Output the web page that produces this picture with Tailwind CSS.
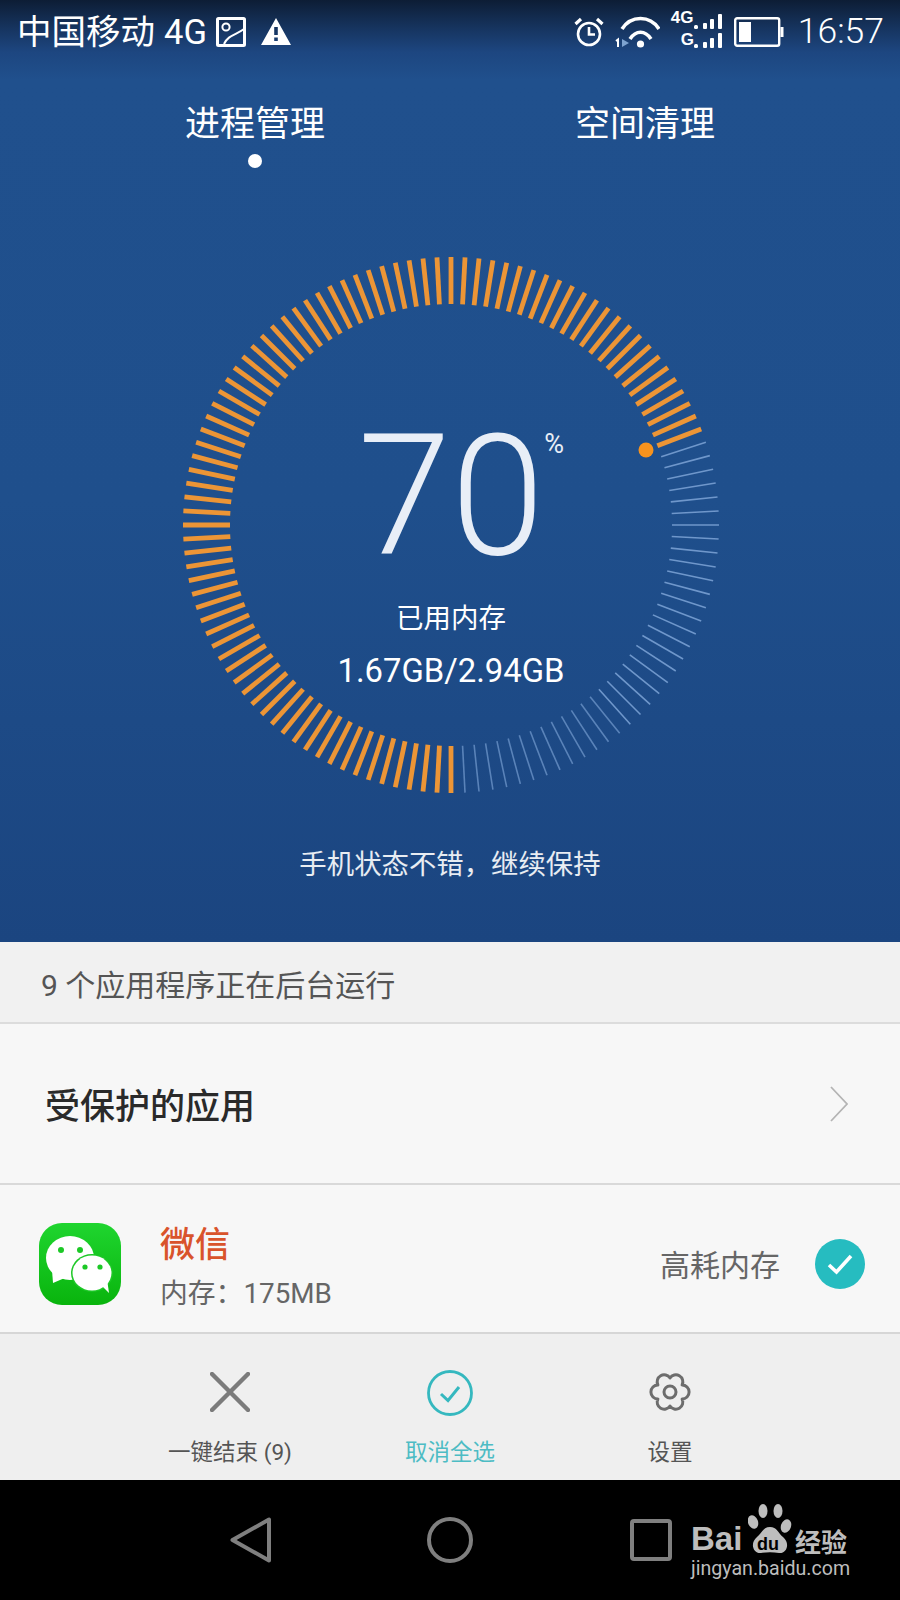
<!DOCTYPE html>
<html lang="zh">
<head>
<meta charset="utf-8">
<title>进程管理</title>
<script src="https://cdn.jsdelivr.net/npm/@tailwindcss/browser@4"></script>
</head>
<body class="m-0 bg-black">
<div class="relative w-[900px] h-[1600px] overflow-hidden font-['Roboto','Noto_Sans_CJK_SC',sans-serif] bg-[#f7f7f7]">

  <!-- blue hero -->
  <section class="h-[942px] text-white bg-[linear-gradient(180deg,#0d1d35_0px,#16345f_28px,#1d4680_52px,#20508d_80px,#1f4f8c_500px,#1b4580_942px)]">
    <!-- status bar -->
    <div class="h-[64px] pl-[17px] pr-[16px] flex items-center justify-between text-[34.5px] leading-none">
      <div class="flex items-center">
        <span>中国移动</span>
        <span class="ml-[9px]">4G</span>
        <svg class="ml-[9px]" width="30" height="30" viewBox="0 0 30 30" fill="none" stroke="white">
          <rect x="1.5" y="1.5" width="27" height="27" rx="1" stroke-width="3"/>
          <circle cx="10" cy="10" r="3.6" stroke-width="2"/>
          <path d="M8 27 C12 18 20 18 28 12" stroke-width="2"/>
        </svg>
        <svg class="ml-[15px]" width="30" height="28" viewBox="0 0 30 28">
          <path fill="white" fill-rule="evenodd" d="M15 0 L30 27 H0 Z M13.2 9 H16.8 V17 H13.2 Z M13.2 19.5 H16.8 V23 H13.2 Z"/>
        </svg>
      </div>
      <div class="flex items-center">
        <svg width="30" height="30" viewBox="0 0 30 30" fill="none" stroke="white">
          <circle cx="15" cy="17" r="11" stroke-width="2.6"/>
          <path d="M15 10 V17.5 H21" stroke-width="2.6"/>
          <path d="M1.5 7 L7 2 M28.5 7 L23 2" stroke-width="3.2"/>
        </svg>
        <svg class="ml-[10px]" width="46" height="34" viewBox="0 0 46 34" fill="none" stroke="white">
          <path d="M8 14 C17 0 36 0 45 14" stroke-width="3.6"/>
          <path d="M16 24 C22 15 31 15 37 24" stroke-width="3.6"/>
          <circle cx="26.5" cy="29" r="3.6" fill="white" stroke="none"/>
          <path d="M8 24 L15 28 L8 32 Z" fill="#7ea3cf" stroke="none"/>
          <path d="M2 26 L4 24.5 V32" stroke-width="2"/>
        </svg>
        <div class="relative ml-[11px] -mt-[4px] w-[51px] h-[40px]">
          <span class="absolute left-0 top-0 text-[17px] font-bold leading-[16px] font-['Liberation_Sans',sans-serif]">4G</span>
          <span class="absolute left-[10px] top-[22px] text-[17px] font-bold leading-[16px] font-['Liberation_Sans',sans-serif]">G</span>
          <svg class="absolute left-0 top-0" width="51" height="40" viewBox="0 0 51 40" fill="white">
            <rect x="23" y="15" width="4" height="4" rx="1.5"/><rect x="32" y="13" width="4" height="6" rx="1"/><rect x="39" y="9" width="4" height="10" rx="1"/><rect x="47" y="4" width="4" height="15" rx="1"/>
            <rect x="23" y="34" width="4" height="4" rx="1.5"/><rect x="32" y="32" width="4" height="6" rx="1"/><rect x="39" y="28" width="4" height="10" rx="1"/><rect x="47" y="23" width="4" height="15" rx="1"/>
          </svg>
        </div>
        <svg class="ml-[12px]" width="50" height="30" viewBox="0 0 50 30" fill="none">
          <rect x="1.2" y="1.2" width="44" height="27.6" rx="2" stroke="white" stroke-width="2.4"/>
          <rect x="5" y="5" width="12" height="20" fill="white"/>
          <rect x="46.5" y="10" width="3" height="10" fill="white"/>
        </svg>
        <span class="ml-[14px] text-[35.5px] font-light">16:57</span>
      </div>
    </div>

    <!-- tabs -->
    <div class="pt-[39px] pl-[185px] flex gap-[250px] text-[35px] leading-[44px]">
      <div class="flex flex-col items-center">
        <span>进程管理</span>
        <span class="mt-[7px] w-[14px] h-[14px] rounded-full bg-white"></span>
      </div>
      <span>空间清理</span>
    </div>

    <!-- gauge -->
    <div class="relative mt-[87px] ml-[181px] w-[540px] h-[540px]">
      <svg class="absolute inset-0" width="540" height="540" viewBox="0 0 540 540">
        <defs>
          <line id="o" x1="270" y1="2" x2="270" y2="49" stroke="#ec9536" stroke-width="4.8"/>
          <line id="b" x1="270" y1="2" x2="270" y2="49" stroke="#6f97cb" stroke-width="1.6"/>
        </defs>
        <g>
          <use href="#o" transform="rotate(180 270 270)"/><use href="#o" transform="rotate(183 270 270)"/><use href="#o" transform="rotate(186 270 270)"/><use href="#o" transform="rotate(189 270 270)"/><use href="#o" transform="rotate(192 270 270)"/><use href="#o" transform="rotate(195 270 270)"/><use href="#o" transform="rotate(198 270 270)"/><use href="#o" transform="rotate(201 270 270)"/><use href="#o" transform="rotate(204 270 270)"/><use href="#o" transform="rotate(207 270 270)"/>
          <use href="#o" transform="rotate(210 270 270)"/><use href="#o" transform="rotate(213 270 270)"/><use href="#o" transform="rotate(216 270 270)"/><use href="#o" transform="rotate(219 270 270)"/><use href="#o" transform="rotate(222 270 270)"/><use href="#o" transform="rotate(225 270 270)"/><use href="#o" transform="rotate(228 270 270)"/><use href="#o" transform="rotate(231 270 270)"/><use href="#o" transform="rotate(234 270 270)"/><use href="#o" transform="rotate(237 270 270)"/>
          <use href="#o" transform="rotate(240 270 270)"/><use href="#o" transform="rotate(243 270 270)"/><use href="#o" transform="rotate(246 270 270)"/><use href="#o" transform="rotate(249 270 270)"/><use href="#o" transform="rotate(252 270 270)"/><use href="#o" transform="rotate(255 270 270)"/><use href="#o" transform="rotate(258 270 270)"/><use href="#o" transform="rotate(261 270 270)"/><use href="#o" transform="rotate(264 270 270)"/><use href="#o" transform="rotate(267 270 270)"/>
          <use href="#o" transform="rotate(270 270 270)"/><use href="#o" transform="rotate(273 270 270)"/><use href="#o" transform="rotate(276 270 270)"/><use href="#o" transform="rotate(279 270 270)"/><use href="#o" transform="rotate(282 270 270)"/><use href="#o" transform="rotate(285 270 270)"/><use href="#o" transform="rotate(288 270 270)"/><use href="#o" transform="rotate(291 270 270)"/><use href="#o" transform="rotate(294 270 270)"/><use href="#o" transform="rotate(297 270 270)"/>
          <use href="#o" transform="rotate(300 270 270)"/><use href="#o" transform="rotate(303 270 270)"/><use href="#o" transform="rotate(306 270 270)"/><use href="#o" transform="rotate(309 270 270)"/><use href="#o" transform="rotate(312 270 270)"/><use href="#o" transform="rotate(315 270 270)"/><use href="#o" transform="rotate(318 270 270)"/><use href="#o" transform="rotate(321 270 270)"/><use href="#o" transform="rotate(324 270 270)"/><use href="#o" transform="rotate(327 270 270)"/>
          <use href="#o" transform="rotate(330 270 270)"/><use href="#o" transform="rotate(333 270 270)"/><use href="#o" transform="rotate(336 270 270)"/><use href="#o" transform="rotate(339 270 270)"/><use href="#o" transform="rotate(342 270 270)"/><use href="#o" transform="rotate(345 270 270)"/><use href="#o" transform="rotate(348 270 270)"/><use href="#o" transform="rotate(351 270 270)"/><use href="#o" transform="rotate(354 270 270)"/><use href="#o" transform="rotate(357 270 270)"/>
          <use href="#o" transform="rotate(0 270 270)"/><use href="#o" transform="rotate(3 270 270)"/><use href="#o" transform="rotate(6 270 270)"/><use href="#o" transform="rotate(9 270 270)"/><use href="#o" transform="rotate(12 270 270)"/><use href="#o" transform="rotate(15 270 270)"/><use href="#o" transform="rotate(18 270 270)"/><use href="#o" transform="rotate(21 270 270)"/><use href="#o" transform="rotate(24 270 270)"/><use href="#o" transform="rotate(27 270 270)"/>
          <use href="#o" transform="rotate(30 270 270)"/><use href="#o" transform="rotate(33 270 270)"/><use href="#o" transform="rotate(36 270 270)"/><use href="#o" transform="rotate(39 270 270)"/><use href="#o" transform="rotate(42 270 270)"/><use href="#o" transform="rotate(45 270 270)"/><use href="#o" transform="rotate(48 270 270)"/><use href="#o" transform="rotate(51 270 270)"/><use href="#o" transform="rotate(54 270 270)"/><use href="#o" transform="rotate(57 270 270)"/>
          <use href="#o" transform="rotate(60 270 270)"/><use href="#o" transform="rotate(63 270 270)"/><use href="#o" transform="rotate(66 270 270)"/><use href="#o" transform="rotate(69 270 270)"/>
        </g>
        <g>
          <use href="#b" transform="rotate(72 270 270)"/><use href="#b" transform="rotate(75 270 270)"/><use href="#b" transform="rotate(78 270 270)"/><use href="#b" transform="rotate(81 270 270)"/><use href="#b" transform="rotate(84 270 270)"/><use href="#b" transform="rotate(87 270 270)"/><use href="#b" transform="rotate(90 270 270)"/><use href="#b" transform="rotate(93 270 270)"/><use href="#b" transform="rotate(96 270 270)"/><use href="#b" transform="rotate(99 270 270)"/>
          <use href="#b" transform="rotate(102 270 270)"/><use href="#b" transform="rotate(105 270 270)"/><use href="#b" transform="rotate(108 270 270)"/><use href="#b" transform="rotate(111 270 270)"/><use href="#b" transform="rotate(114 270 270)"/><use href="#b" transform="rotate(117 270 270)"/><use href="#b" transform="rotate(120 270 270)"/><use href="#b" transform="rotate(123 270 270)"/><use href="#b" transform="rotate(126 270 270)"/><use href="#b" transform="rotate(129 270 270)"/>
          <use href="#b" transform="rotate(132 270 270)"/><use href="#b" transform="rotate(135 270 270)"/><use href="#b" transform="rotate(138 270 270)"/>
        </g>
        <g opacity="0.75">
          <use href="#b" transform="rotate(141 270 270)"/><use href="#b" transform="rotate(144 270 270)"/><use href="#b" transform="rotate(147 270 270)"/><use href="#b" transform="rotate(150 270 270)"/><use href="#b" transform="rotate(153 270 270)"/><use href="#b" transform="rotate(156 270 270)"/><use href="#b" transform="rotate(159 270 270)"/>
          <use href="#b" transform="rotate(162 270 270)"/><use href="#b" transform="rotate(165 270 270)"/><use href="#b" transform="rotate(168 270 270)"/><use href="#b" transform="rotate(171 270 270)"/><use href="#b" transform="rotate(174 270 270)"/><use href="#b" transform="rotate(177 270 270)"/>
        </g>
        <circle cx="465" cy="195" r="7.5" fill="#f7931e"/>
      </svg>
      <div class="absolute inset-0 flex flex-col items-center pt-[158px]">
        <div class="relative text-[168px] leading-[168px] font-[350] text-[#e8eef7]">70<span class="absolute left-full top-[18px] text-[27px] leading-[27px] font-normal">%</span></div>
        <div class="mt-[18px] text-[27.5px] leading-[40px]">已用内存</div>
        <div class="mt-[12px] text-[32.8px] leading-[40px]">1.67GB/2.94GB</div>
      </div>
    </div>

    <div class="mt-[50px] text-center text-[27.4px] leading-[40px] text-white/90">手机状态不错，继续保持</div>
  </section>

  <!-- section header -->
  <div class="h-[82px] pt-[7px] px-[41px] flex items-center bg-[#f1f1f1] border-b-2 border-[#dcdcdc] text-[30px] text-[#555]">9 个应用程序正在后台运行</div>

  <!-- protected apps -->
  <div class="h-[161px] pl-[45px] pr-[52px] flex items-center justify-between border-b-2 border-[#d9d9d9] text-[35px] text-[#2a2a2a]">
    <span class="font-medium pt-[9px]">受保护的应用</span>
    <svg width="18" height="36" viewBox="0 0 18 36" fill="none" stroke="#b4b4b4" stroke-width="1.8"><path d="M1 1 L17 18 L1 35"/></svg>
  </div>

  <!-- app row -->
  <div class="h-[149px] pl-[39px] pr-[35px] flex items-start border-b-2 border-[#d6d6d6]">
    <svg class="mt-[38px]" width="82" height="82" viewBox="0 0 82 82">
      <defs><linearGradient id="wx" x1="0" y1="0" x2="0" y2="1"><stop offset="0" stop-color="#1fd52f"/><stop offset="1" stop-color="#09b40d"/></linearGradient></defs>
      <rect width="82" height="82" rx="23" fill="url(#wx)"/>
      <ellipse cx="31" cy="35" rx="24" ry="22" fill="white"/>
      <path d="M13 47 L14 60 L28 54 Z" fill="white"/>
      <ellipse cx="53" cy="50" rx="21" ry="19" fill="#1cc826"/>
      <ellipse cx="53" cy="50" rx="19.5" ry="17.5" fill="white"/>
      <path d="M62 62 L70 70 L68 56 Z" fill="white"/>
      <circle cx="22" cy="27" r="3" fill="#1cc826"/><circle cx="41" cy="27" r="3" fill="#1cc826"/>
      <circle cx="46" cy="44" r="2.6" fill="#1cc826"/><circle cx="61" cy="44" r="2.6" fill="#1cc826"/>
    </svg>
    <div class="ml-[39px] mt-[39px] flex flex-col">
      <span class="text-[35px] leading-[44px] text-[#d9532b] font-medium">微信</span>
      <span class="mt-[6px] text-[27.8px] leading-[40px] text-[#666]">内存：175MB</span>
    </div>
    <span class="ml-auto mt-[61px] text-[30px] leading-[40px] text-[#666]">高耗内存</span>
    <span class="ml-[35px] mt-[54px] w-[50px] h-[50px] rounded-full bg-[#26bcc0] flex items-center justify-center">
      <svg width="26" height="22" viewBox="0 0 26 22" fill="none" stroke="white" stroke-width="3.6"><path d="M2 12 L9.5 19 L24 3"/></svg>
    </span>
  </div>

  <!-- bottom action bar -->
  <div class="h-[146px] bg-[#efefef] relative flex items-start text-[22.5px] leading-[30px]">
    <div class="absolute left-[130px] w-[200px] top-[38px] flex flex-col items-center text-[#555]">
      <svg width="40" height="40" viewBox="0 0 40 40" stroke="#7b7b7b" stroke-width="4.4" stroke-linecap="round"><path d="M2 2 L38 38 M38 2 L2 38"/></svg>
      <span class="mt-[25px]">一键结束 (9)</span>
    </div>
    <div class="absolute left-[350px] w-[200px] top-[36px] flex flex-col items-center text-[#4dbcc4]">
      <svg width="46" height="46" viewBox="0 0 46 46" fill="none" stroke="#35b8bf" stroke-width="2.8"><circle cx="23" cy="23" r="21.5"/><path d="M14 24 L21 30.5 L32 17" stroke-width="3"/></svg>
      <span class="mt-[21px]">取消全选</span>
    </div>
    <div class="absolute left-[570px] w-[200px] top-[38px] flex flex-col items-center text-[#555]">
      <svg width="44" height="40" viewBox="0 0 44 40" fill="none" stroke="#6d6d6d" stroke-width="3" stroke-linejoin="round">
        <path d="M22 6 A7 7 0 0 1 34.1 13 A7 7 0 0 1 34.1 27 A7 7 0 0 1 22 34 A7 7 0 0 1 9.9 27 A7 7 0 0 1 9.9 13 A7 7 0 0 1 22 6 Z"/>
        <circle cx="22" cy="20" r="6"/>
      </svg>
      <span class="mt-[25px]">设置</span>
    </div>
  </div>

  <!-- nav bar -->
  <div class="h-[120px] bg-black relative flex items-center pl-[230px]">
    <svg width="42" height="46" viewBox="0 0 42 46" fill="none" stroke="#7f7f7f" stroke-width="4" stroke-linejoin="round"><path d="M39 2.5 V43.5 L2.5 23 Z"/></svg>
    <svg class="ml-[155px]" width="46" height="46" viewBox="0 0 46 46" fill="none" stroke="#7f7f7f" stroke-width="4"><circle cx="23" cy="23" r="21"/></svg>
    <svg class="ml-[157px]" width="42" height="42" viewBox="0 0 42 42" fill="none" stroke="#7f7f7f" stroke-width="4"><rect x="2" y="2" width="38" height="38" rx="2"/></svg>

    <!-- watermark -->
    <div class="absolute left-[691px] top-[26px] w-[170px] h-[90px] text-[#bdbdbd] font-['Liberation_Sans',sans-serif]">
      <span class="absolute left-0 top-[14px] text-[33px] leading-[38px] font-bold">Bai</span>
      <svg class="absolute left-[57px] -top-[6px]" width="44" height="56" viewBox="0 0 44 56" fill="#bdbdbd">
        <ellipse cx="5" cy="22" rx="5" ry="7" transform="rotate(-20 5 22)"/>
        <ellipse cx="15" cy="11" rx="4.5" ry="7"/>
        <ellipse cx="30" cy="11" rx="4.5" ry="7"/>
        <ellipse cx="38" cy="26" rx="5" ry="7" transform="rotate(20 38 26)"/>
        <path d="M22 27 C29 27 30 33 35 37 C43 44 38 54 31 53 C25 52 19 52 13 53 C6 54 1 44 9 37 C14 33 15 27 22 27 Z"/>
      </svg>
      <span class="absolute left-[66px] top-[28px] text-[18px] leading-[20px] font-bold text-black">du</span>
      <span class="absolute left-[104px] top-[20px] text-[26px] leading-[30px] font-bold font-['Noto_Sans_CJK_SC',sans-serif]">经验</span>
      <span class="absolute left-0 top-[50px] text-[19.6px] leading-[26px] font-['Roboto',sans-serif]">jingyan.baidu.com</span>
    </div>
  </div>
</div>
</body>
</html>
